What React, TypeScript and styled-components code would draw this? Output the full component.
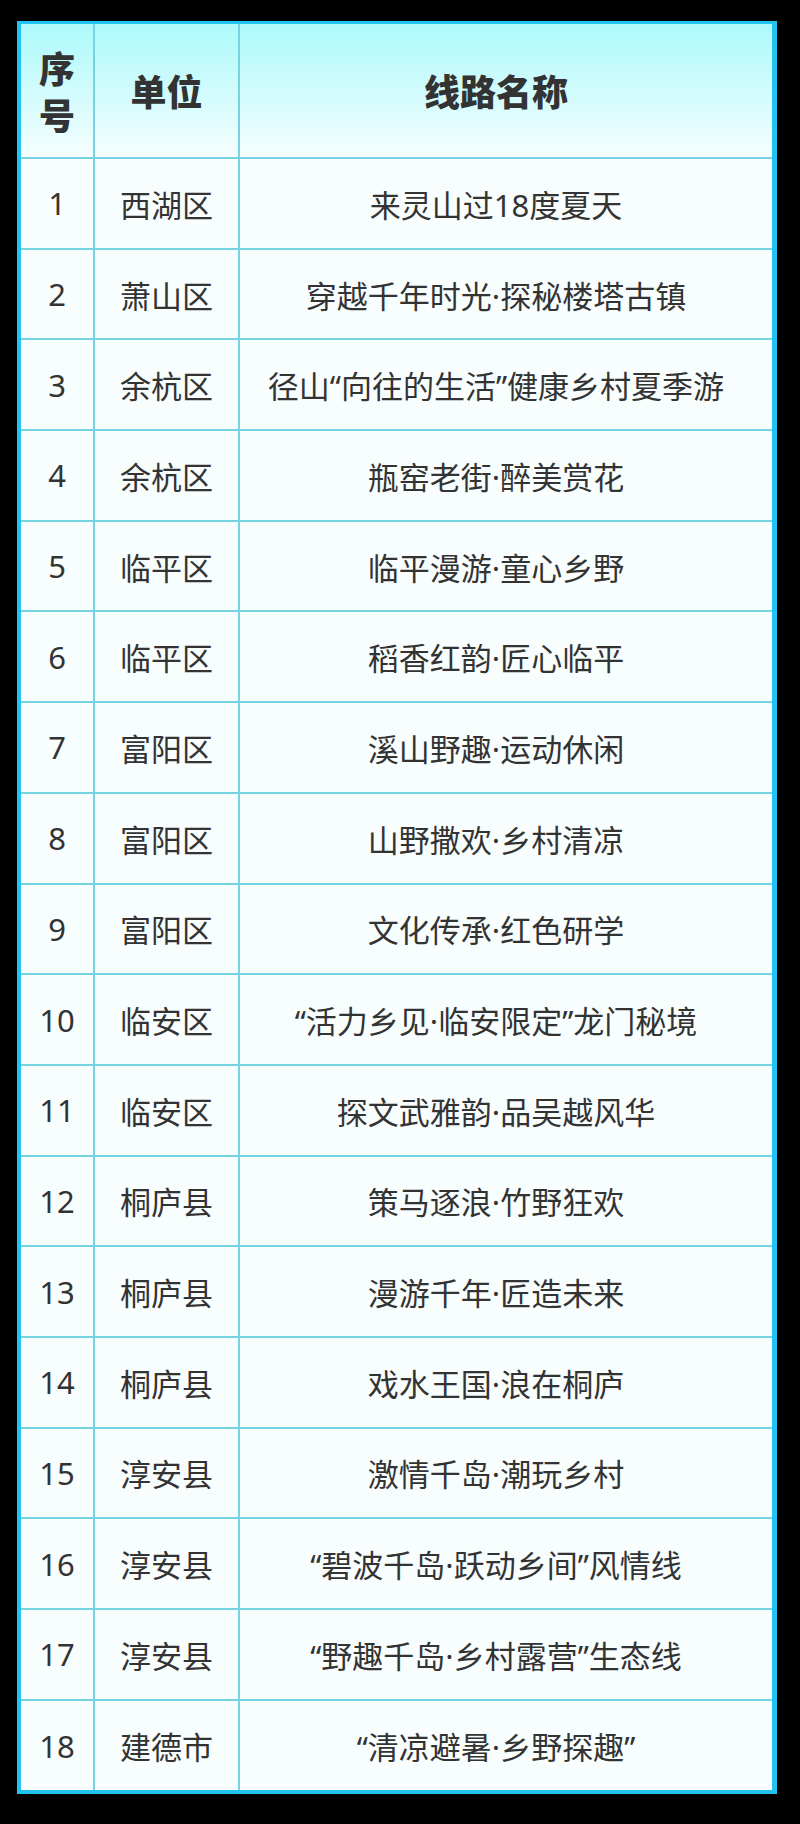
import { createGlobalStyle, styled } from "styled-components";

const rows: [string, string][] = [
  ["西湖区", "来灵山过18度夏天"],
  ["萧山区", "穿越千年时光·探秘楼塔古镇"],
  ["余杭区", "径山“向往的生活”健康乡村夏季游"],
  ["余杭区", "瓶窑老街·醉美赏花"],
  ["临平区", "临平漫游·童心乡野"],
  ["临平区", "稻香红韵·匠心临平"],
  ["富阳区", "溪山野趣·运动休闲"],
  ["富阳区", "山野撒欢·乡村清凉"],
  ["富阳区", "文化传承·红色研学"],
  ["临安区", "“活力乡见·临安限定”龙门秘境"],
  ["临安区", "探文武雅韵·品吴越风华"],
  ["桐庐县", "策马逐浪·竹野狂欢"],
  ["桐庐县", "漫游千年·匠造未来"],
  ["桐庐县", "戏水王国·浪在桐庐"],
  ["淳安县", "激情千岛·潮玩乡村"],
  ["淳安县", "“碧波千岛·跃动乡间”风情线"],
  ["淳安县", "“野趣千岛·乡村露营”生态线"],
  ["建德市", "“清凉避暑·乡野探趣”"],
];

const GlobalStyle = createGlobalStyle`
  html, body {
    margin: 0;
    padding: 0;
    background: #000;
  }
  body {
    font-family: "Noto Sans", "Noto Sans CJK SC", sans-serif;
    color: #333;
  }
`;

const Page = styled.div`
  width: 800px;
  height: 1824px;
  padding: 21px 0 0 17px;
  box-sizing: border-box;
`;

const Frame = styled.div`
  width: 760px;
  box-sizing: border-box;
  border: 4px solid #22c3ef;
  border-right-width: 5px;
  border-top-width: 3px;
  background: #f8fdfe;
`;

const Table = styled.table`
  width: 100%;
  border-collapse: collapse;
  table-layout: fixed;
`;

const HeadRow = styled.tr`
  height: 134px;
  background: linear-gradient(#aef9fb 0%, #d4fcfd 55%, #f6fefe 100%);
`;

const Th = styled.th<{ $w?: number }>`
  width: ${(p) => (p.$w ? `${p.$w}px` : "auto")};
  padding: 0;
  font-family: "Noto Sans CJK SC", sans-serif;
  font-size: 36px;
  font-weight: 900;
  line-height: 1.3;
  color: #333;
  text-align: center;
  border: 2px solid #76d3e2;
  border-top: none;
  &:first-child {
    border-left: none;
  }
  &:last-child {
    border-right: none;
    padding-right: 20px;
  }
`;

const StackLine = styled.span`
  display: block;
  line-height: 47px;
`;

const Tr = styled.tr`
  height: 90.7px;
  &:last-child td {
    border-bottom: none;
  }
`;

const Td = styled.td`
  padding: 0;
  font-size: 31px;
  font-weight: 400;
  color: #333;
  text-align: center;
  white-space: nowrap;
  border: 2px solid #76d3e2;
  &:first-child {
    border-left: none;
  }
  &:last-child {
    border-right: none;
    padding-right: 20px;
  }
`;

export default function App() {
  return (
    <Page>
      <GlobalStyle />
      <Frame>
        <Table>
          <thead>
            <HeadRow>
              <Th $w={72}>
                <StackLine>序</StackLine>
                <StackLine>号</StackLine>
              </Th>
              <Th $w={143}>单位</Th>
              <Th>线路名称</Th>
            </HeadRow>
          </thead>
          <tbody>
            {rows.map(([unit, name], i) => (
              <Tr key={i}>
                <Td>{i + 1}</Td>
                <Td>{unit}</Td>
                <Td>{name}</Td>
              </Tr>
            ))}
          </tbody>
        </Table>
      </Frame>
    </Page>
  );
}
